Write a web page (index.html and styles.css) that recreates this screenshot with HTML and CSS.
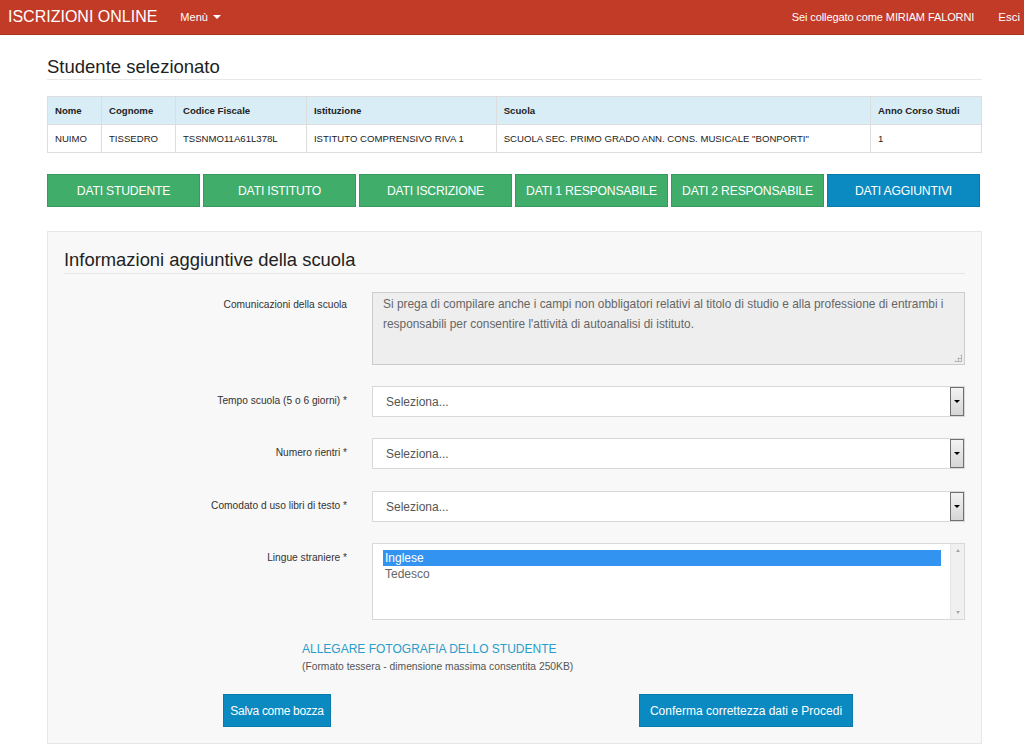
FILE: index.html
```html
<!DOCTYPE html>
<html lang="it">
<head>
<meta charset="utf-8">
<title>Iscrizioni Online</title>
<link rel="stylesheet" href="styles.css">
</head>
<body>
<nav class="navbar">
  <div class="nav-left">
    <span class="brand">ISCRIZIONI ONLINE</span>
    <span class="menu">Menù <span class="caret"></span></span>
  </div>
  <div class="nav-right">
    <span class="user">Sei collegato come MIRIAM FALORNI</span>
    <span class="logout">Esci</span>
  </div>
</nav>

<main class="container">
  <h2 class="page-title">Studente selezionato</h2>

  <table class="student-table">
    <thead>
      <tr>
        <th class="c-nome">Nome</th>
        <th class="c-cognome">Cognome</th>
        <th class="c-cf">Codice Fiscale</th>
        <th class="c-ist">Istituzione</th>
        <th class="c-scuola">Scuola</th>
        <th class="c-anno">Anno Corso Studi</th>
      </tr>
    </thead>
    <tbody>
      <tr>
        <td>NUIMO</td>
        <td>TISSEDRO</td>
        <td>TSSNMO11A61L378L</td>
        <td>ISTITUTO COMPRENSIVO RIVA 1</td>
        <td>SCUOLA SEC. PRIMO GRADO ANN. CONS. MUSICALE "BONPORTI"</td>
        <td>1</td>
      </tr>
    </tbody>
  </table>

  <div class="tabs">
    <span class="tab">DATI STUDENTE</span>
    <span class="tab">DATI ISTITUTO</span>
    <span class="tab">DATI ISCRIZIONE</span>
    <span class="tab">DATI 1 RESPONSABILE</span>
    <span class="tab">DATI 2 RESPONSABILE</span>
    <span class="tab active">DATI AGGIUNTIVI</span>
  </div>

  <section class="panel">
    <h3 class="panel-title">Informazioni aggiuntive della scuola</h3>

    <div class="form-row row-text">
      <label class="lbl">Comunicazioni della scuola</label>
      <div class="textarea">Si prega di compilare anche i campi non obbligatori relativi al titolo di studio e alla professione di entrambi i responsabili per consentire l'attività di autoanalisi di istituto.<span class="grip"></span></div>
    </div>

    <div class="form-row">
      <label class="lbl">Tempo scuola (5 o 6 giorni) *</label>
      <div class="select"><span class="sel-text">Seleziona...</span><span class="sel-btn"><span class="tri"></span></span></div>
    </div>

    <div class="form-row">
      <label class="lbl">Numero rientri *</label>
      <div class="select"><span class="sel-text">Seleziona...</span><span class="sel-btn"><span class="tri"></span></span></div>
    </div>

    <div class="form-row row-c">
      <label class="lbl">Comodato d uso libri di testo *</label>
      <div class="select"><span class="sel-text">Seleziona...</span><span class="sel-btn"><span class="tri"></span></span></div>
    </div>

    <div class="form-row">
      <label class="lbl">Lingue straniere *</label>
      <div class="listbox">
        <div class="options">
          <div class="opt selected">Inglese</div>
          <div class="opt">Tedesco</div>
        </div>
        <div class="scrollbar">
          <span class="sb-up"></span>
          <span class="sb-down"></span>
        </div>
      </div>
    </div>

    <div class="attach">
      <a class="attach-link">ALLEGARE FOTOGRAFIA DELLO STUDENTE</a>
      <div class="attach-note">(Formato tessera - dimensione massima consentita 250KB)</div>
    </div>

    <div class="actions">
      <button class="btn btn-draft">Salva come bozza</button>
      <button class="btn btn-confirm">Conferma correttezza dati e Procedi</button>
    </div>
  </section>
</main>
</body>
</html>
```

FILE: styles.css
```css
* { box-sizing: border-box; }

html, body {
  margin: 0;
  padding: 0;
  background: #ffffff;
  font-family: "Liberation Sans", Arial, sans-serif;
  color: #333333;
}

.navbar {
  height: 35px;
  background: #c23b27;
  border-bottom: 1px solid #a93220;
  display: flex;
  justify-content: space-between;
  align-items: center;
  color: #ffffff;
}

.nav-left {
  display: flex;
  align-items: center;
}

.brand {
  font-size: 16px;
  padding-left: 8px;
  margin-top: -1px;
}

.menu {
  font-size: 11px;
  margin-left: 23px;
  display: flex;
  align-items: center;
}

.caret {
  display: inline-block;
  width: 0;
  height: 0;
  margin-left: 5px;
  border-left: 4px solid transparent;
  border-right: 4px solid transparent;
  border-top: 4px solid #ffffff;
}

.nav-right {
  display: flex;
  align-items: center;
  font-size: 11px;
  padding-right: 4px;
}

.user {
  letter-spacing: -0.1px;
}

.logout {
  margin-left: 24px;
  font-size: 11.5px;
}

.container {
  width: 935px;
  margin-left: 47px;
}

.page-title {
  margin: 0;
  padding-top: 20px;
  font-size: 18.5px;
  font-weight: normal;
  color: #222222;
  line-height: 24px;
  border-bottom: 1px solid #e8e8e8;
  height: 45px;
}

.student-table {
  margin-top: 16px;
  width: 935px;
  border-collapse: collapse;
  font-size: 9.6px;
  color: #222222;
}

.student-table th,
.student-table td {
  border: 1px solid #dddddd;
  text-align: left;
  padding: 0 7px;
}

.student-table th {
  background: #d9edf7;
  font-weight: bold;
  height: 28px;
}

.student-table td {
  height: 28px;
  background: #ffffff;
}

.c-nome { width: 54px; }
.c-cognome { width: 74px; }
.c-cf { width: 131px; }
.c-ist { width: 190px; }
.c-scuola { width: 375px; }
.c-anno { width: 111px; }

.tabs {
  margin-top: 21px;
  display: flex;
  gap: 3px;
}

.tab {
  width: 153px;
  height: 33px;
  background: #40ad6b;
  border: 1px solid #38995e;
  color: #ffffff;
  font-size: 12.2px;
  display: flex;
  align-items: center;
  justify-content: center;
  letter-spacing: -0.2px;
}

.tab.active {
  background: #0b8ac2;
  border-color: #0a7bad;
}

.panel {
  margin-top: 24px;
  background: #f8f8f8;
  border: 1px solid #e6e6e6;
  padding: 0 16px;
  height: 513px;
}

.panel-title {
  margin: 0;
  padding-top: 16px;
  font-size: 18.4px;
  font-weight: normal;
  color: #222222;
  line-height: 24px;
  height: 42px;
  border-bottom: 1px solid #e6e6e6;
}

.form-row {
  display: flex;
  margin-top: 21px;
}

.row-text {
  margin-top: 18px;
}

.row-c {
  margin-top: 22px;
}

.lbl {
  width: 308px;
  text-align: right;
  padding-right: 25px;
  font-size: 10.2px;
  color: #333333;
  padding-top: 9px;
  flex-shrink: 0;
}

.row-text .lbl {
  padding-top: 7px;
}

.textarea {
  position: relative;
  width: 593px;
  height: 73px;
  background: #eeeeee;
  border: 1px solid #cccccc;
  font-size: 11.9px;
  color: #666666;
  line-height: 20px;
  padding: 1px 10px;
}

.grip {
  position: absolute;
  right: 2px;
  bottom: 2px;
  width: 8px;
  height: 8px;
  background-image: radial-gradient(circle, #b5b5b5 1px, transparent 1.2px);
  background-size: 3px 3px;
  clip-path: polygon(100% 0, 100% 100%, 0 100%);
}

.select {
  width: 593px;
  height: 31px;
  background: #ffffff;
  border: 1px solid #d8d8d8;
  display: flex;
  align-items: center;
  justify-content: space-between;
}

.sel-text {
  font-size: 12px;
  color: #555555;
  padding-left: 13px;
}

.sel-btn {
  width: 14px;
  height: 29px;
  border: 1px solid #707070;
  background: linear-gradient(#f2f2f2, #d6d6d6);
  display: flex;
  align-items: center;
  justify-content: center;
}

.tri {
  width: 0;
  height: 0;
  border-left: 3px solid transparent;
  border-right: 3px solid transparent;
  border-top: 3px solid #000000;
}

.listbox {
  width: 593px;
  height: 77px;
  background: #ffffff;
  border: 1px solid #d8d8d8;
  display: flex;
  justify-content: space-between;
}

.options {
  padding-top: 6px;
  padding-left: 10px;
  flex: 1;
}

.opt {
  font-size: 12px;
  color: #666666;
  line-height: 16px;
  padding-left: 2px;
  width: 558px;
}

.opt.selected {
  background: #3393f0;
  color: #ffffff;
}

.scrollbar {
  width: 14px;
  background: #f0f0f0;
  border-left: 1px solid #e4e4e4;
  display: flex;
  flex-direction: column;
  justify-content: space-between;
  align-items: center;
  padding: 5px 0;
}

.sb-up {
  width: 0;
  height: 0;
  border-left: 2.5px solid transparent;
  border-right: 2.5px solid transparent;
  border-bottom: 3px solid #a8a8a8;
}

.sb-down {
  width: 0;
  height: 0;
  border-left: 2.5px solid transparent;
  border-right: 2.5px solid transparent;
  border-top: 3px solid #a8a8a8;
}

.attach {
  padding-left: 238px;
  margin-top: 21px;
}

.attach-link {
  display: block;
  font-size: 12px;
  color: #2a9dc9;
  line-height: 16px;
}

.attach-note {
  margin-top: 4px;
  font-size: 10.3px;
  color: #555555;
}

.actions {
  display: flex;
  margin-top: 22px;
  padding-left: 159px;
}

.btn {
  height: 33px;
  background: #0b8ac2;
  border: 1px solid #0a7aad;
  color: #ffffff;
  font-family: "Liberation Sans", Arial, sans-serif;
  font-size: 12px;
  padding: 0;
  white-space: nowrap;
}

.btn-draft {
  width: 108px;
  letter-spacing: -0.3px;
}

.btn-confirm {
  margin-left: 308px;
  width: 214px;
}
```
